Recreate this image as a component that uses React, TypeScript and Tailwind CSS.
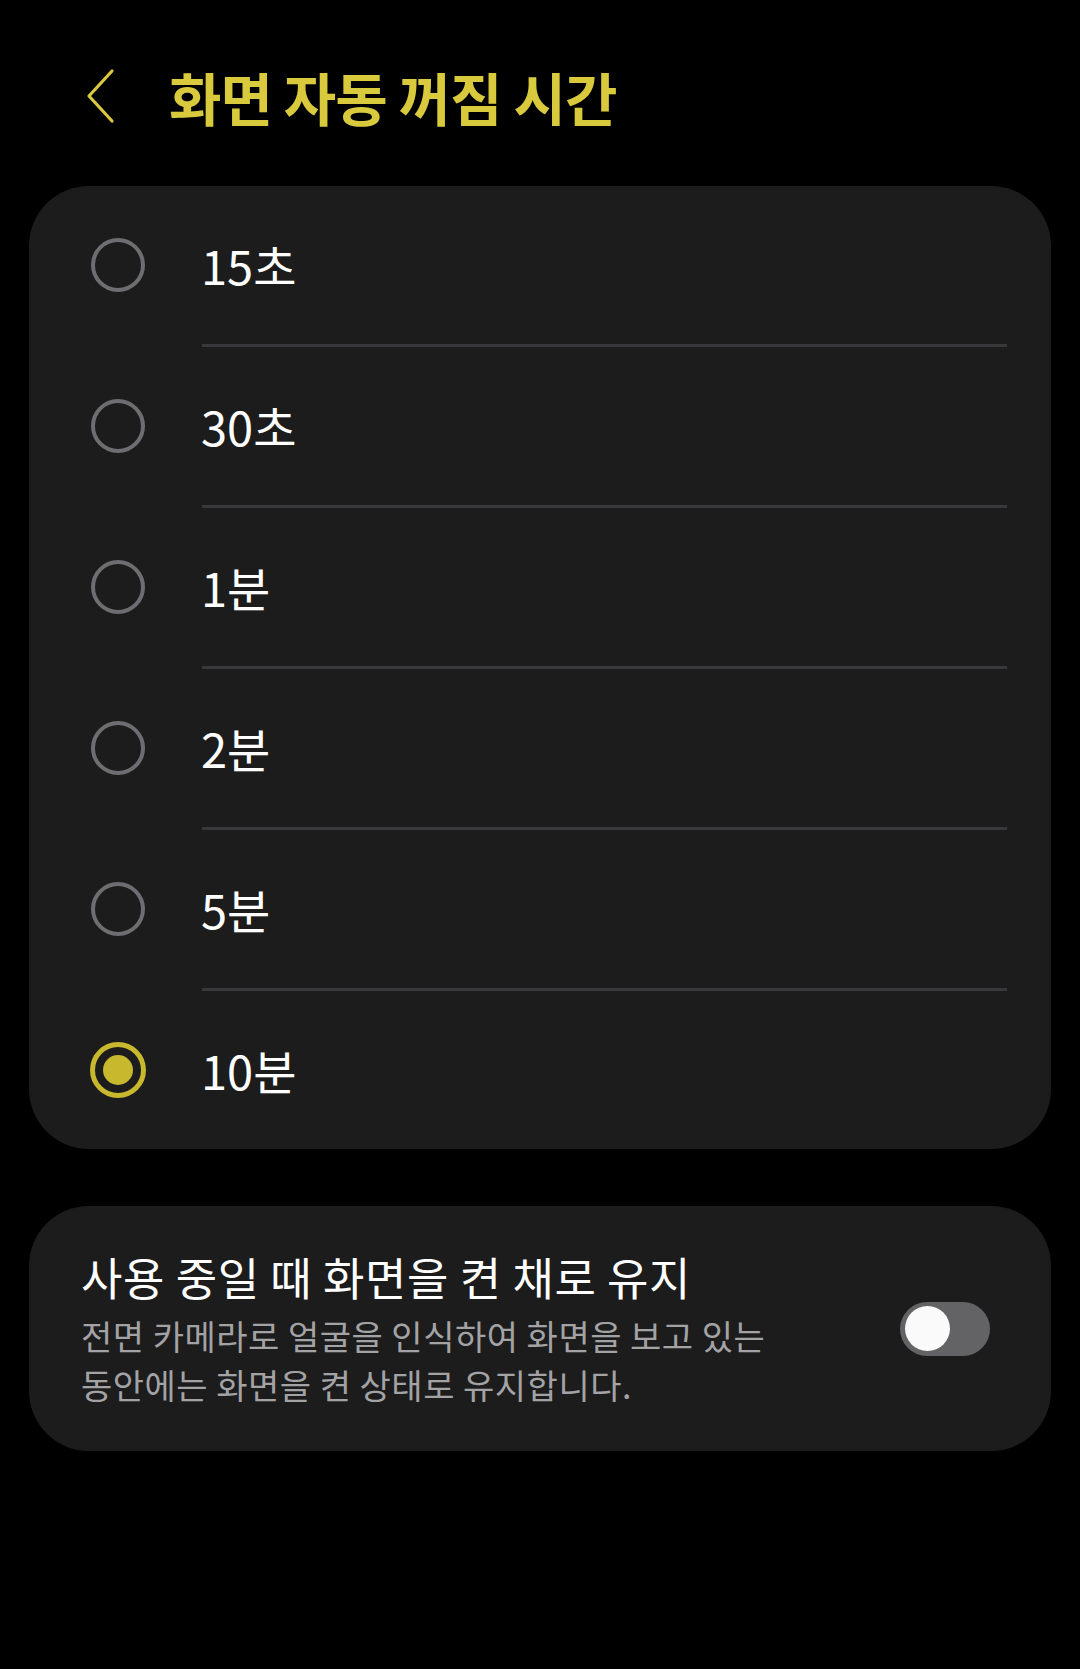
import React from "react";

const options = ["15초", "30초", "1분", "2분", "5분", "10분"];
const selected = "10분";

function Radio({ on }: { on: boolean }) {
  if (on) {
    return (
      <div className="w-[56px] h-[56px] rounded-full border-[5px] border-[#c7b82e] flex items-center justify-center shrink-0">
        <div className="w-[30px] h-[30px] rounded-full bg-[#c7b82e]" />
      </div>
    );
  }
  return <div className="w-[54px] h-[54px] rounded-full border-[4px] border-[#6e6e72] shrink-0 mx-[1px]" />;
}

export default function App() {
  return (
    <div
      className="min-h-[1669px] w-[1080px] bg-black"
      style={{ fontFamily: '"Noto Sans CJK KR", "Noto Sans", sans-serif' }}
    >
      <div className="pt-[60px] h-[134px] flex items-start">
        <div className="h-[72px] flex items-center pl-[84px]">
          <svg width="32" height="56" viewBox="0 0 32 56" fill="none">
            <path d="M28 3 L5 28 L28 53" stroke="#d8ca3c" strokeWidth="3.2" strokeLinecap="round" strokeLinejoin="round" />
          </svg>
          <h1 className="ml-[53px] text-[57px] leading-[72px] font-bold text-[#d8ca3c] tracking-[-1px]">
            화면 자동 꺼짐 시간
          </h1>
        </div>
      </div>

      <div className="mt-[52px] mx-[29px] rounded-[60px] bg-[#1c1c1c] overflow-hidden">
        {options.map((o, i) => (
          <div key={o}>
            {i > 0 && <div className="ml-[173px] mr-[44px] h-[3px] bg-[#38383a]" />}
            <div className="h-[158px] flex items-center pl-[61px]">
              <Radio on={o === selected} />
              <span className="ml-[55px] text-[47px] leading-[60px] text-white">{o}</span>
            </div>
          </div>
        ))}
      </div>

      <div className="mt-[57px] mx-[29px] rounded-[60px] bg-[#1c1c1c] h-[245px] flex items-center pl-[52px] pr-[61px]">
        <div className="w-[740px] break-keep">
          <div className="text-[45px] leading-[56px] tracking-[0.6px] text-white">사용 중일 때 화면을 켠 채로 유지</div>
          <div className="mt-[6px] text-[34px] leading-[49px] tracking-[0.5px] text-[#a3a3a6]">
            전면 카메라로 얼굴을 인식하여 화면을 보고 있는 동안에는 화면을 켠 상태로 유지합니다.
          </div>
        </div>
        <div className="ml-auto w-[90px] h-[54px] rounded-full bg-[#636366] flex items-center pl-[5px]">
          <div className="w-[45px] h-[45px] rounded-full bg-[#fafafa]" />
        </div>
      </div>
    </div>
  );
}
